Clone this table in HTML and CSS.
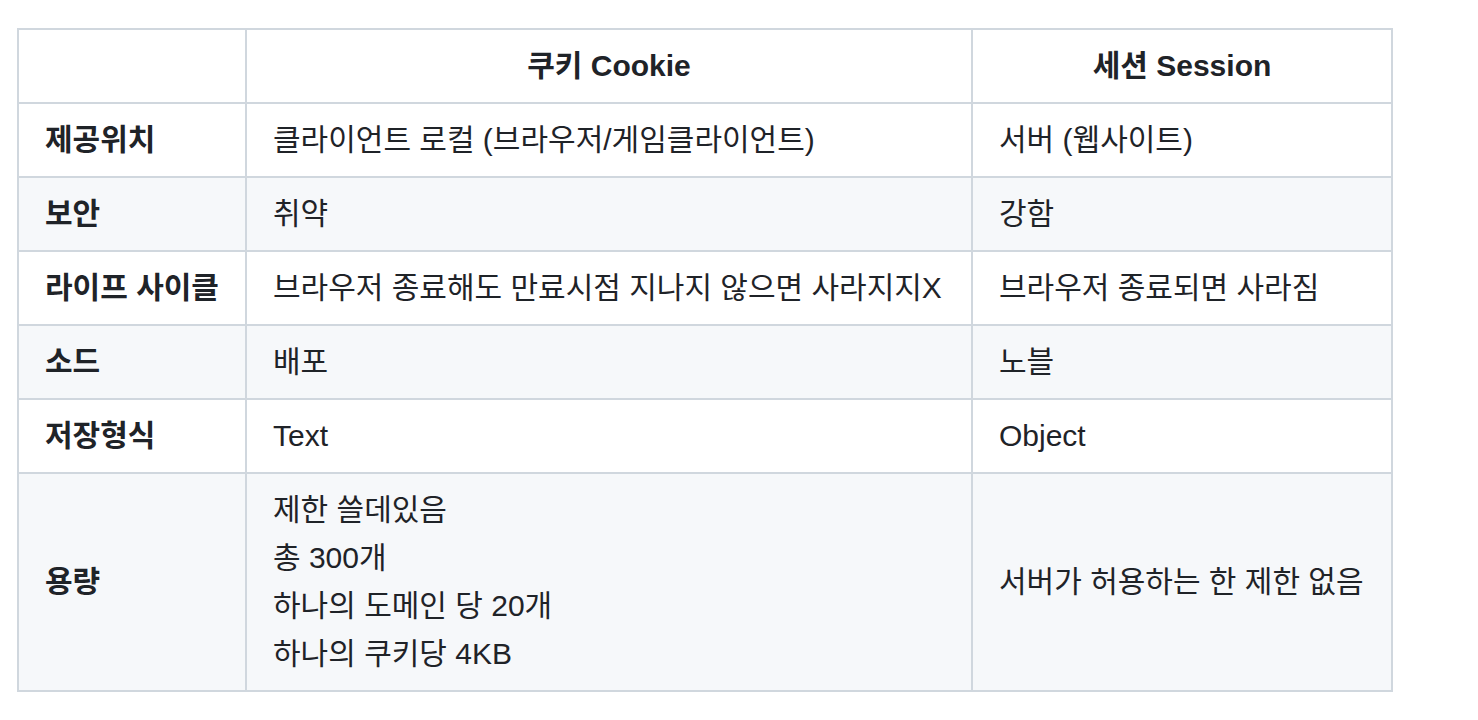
FILE: index.html
```html
<!DOCTYPE html>
<html lang="ko">
<head>
<meta charset="utf-8">
<title>쿠키 vs 세션</title>
<link rel="stylesheet" href="styles.css">
</head>
<body>
<table class="cmp">
  <colgroup><col class="c1"><col class="c2"><col class="c3"></colgroup>
  <thead>
    <tr><th></th><th>쿠키 Cookie</th><th>세션 Session</th></tr>
  </thead>
  <tbody>
    <tr><td><strong>제공위치</strong></td><td>클라이언트 로컬 (브라우저/게임클라이언트)</td><td>서버 (웹사이트)</td></tr>
    <tr><td><strong>보안</strong></td><td>취약</td><td>강함</td></tr>
    <tr><td><strong>라이프 사이클</strong></td><td>브라우저 종료해도 만료시점 지나지 않으면 사라지지X</td><td>브라우저 종료되면 사라짐</td></tr>
    <tr><td><strong>소드</strong></td><td>배포</td><td>노블</td></tr>
    <tr><td><strong>저장형식</strong></td><td>Text</td><td>Object</td></tr>
    <tr><td><strong>용량</strong></td><td>제한 쓸데있음<br>총 300개<br>하나의 도메인 당 20개<br>하나의 쿠키당 4KB</td><td>서버가 허용하는 한 제한 없음</td></tr>
  </tbody>
</table>
</body>
</html>
```
FILE: styles.css
```css
html, body {
  margin: 0;
  padding: 0;
  background: #ffffff;
}
body {
  font-family: "Liberation Sans", "Noto Sans CJK KR", sans-serif;
  font-size: 30px;
  line-height: 48px;
  color: #1f2328;
  font-feature-settings: "palt";
}
.cmp {
  border-collapse: collapse;
  table-layout: fixed;
  width: 1374px;
  margin: 28px 0 0 17px;
}
.c1 { width: 228px; }
.c2 { width: 726px; }
.c3 { width: 420px; }
.cmp th,
.cmp td {
  border: 2px solid #d0d7de;
  padding: 12px 26px;
  vertical-align: middle;
  white-space: nowrap;
}
.cmp th {
  font-weight: 700;
  text-align: center;
}
.cmp td {
  text-align: left;
}
.cmp strong {
  font-weight: 700;
}
.cmp tbody tr:nth-child(2n) {
  background: #f6f8fa;
}
```
